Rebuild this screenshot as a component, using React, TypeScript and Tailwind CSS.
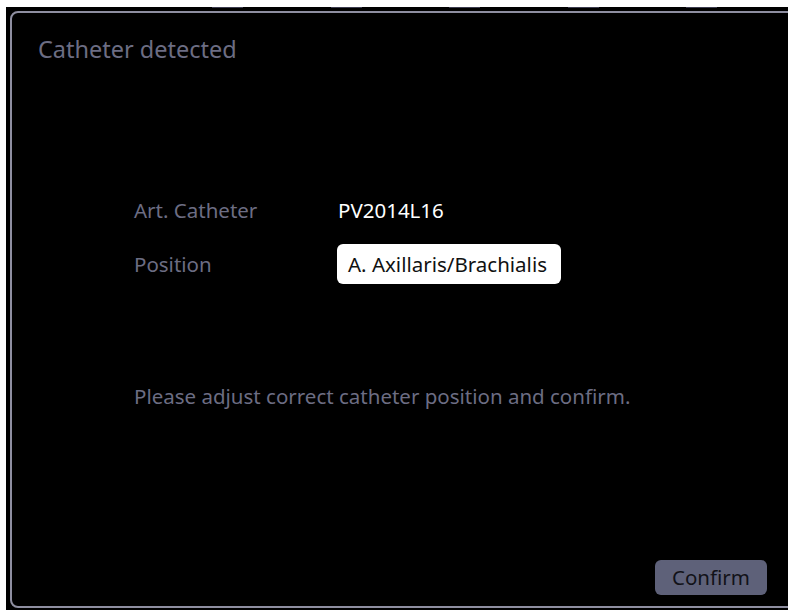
import React from 'react'

const TAB_COUNT = 5

const font = { fontFamily: '"Noto Sans", "Open Sans", sans-serif' }

function Row({ label, children }: { label: string; children: React.ReactNode }) {
  return (
    <div className="grid grid-cols-[203px_1fr] items-center h-[40px]">
      <span className="text-[#6c6d83]">{label}</span>
      <div className="flex">{children}</div>
    </div>
  )
}

export default function App() {
  return (
    <div className="w-[788px] h-[610px] bg-white overflow-hidden text-[20.5px]" style={font}>
      <div className="ml-[6px] mt-[7px] w-[782px] h-[603px] bg-black overflow-hidden flex flex-col">
        {/* tab edges peeking in from above */}
        <div className="flex h-px ml-[206px] gap-[87.5px]">
          {Array.from({ length: TAB_COUNT }).map((_, i) => (
            <div key={i} className="w-[31px] h-px bg-[#3c3c4e]" />
          ))}
        </div>

        <div className="mt-[3px] ml-[4px] w-[800px] h-[597px] shrink-0 border-2 border-[#8e8ea0] rounded-[8px]">
          <div className="w-[755px] h-full flex flex-col">
            <h1 className="ml-[26px] mt-[21px] text-[23.5px] leading-[30px] text-[#6c6d83]">Catheter detected</h1>

            <div className="ml-[122px] mt-[126px] flex flex-col gap-[14px]">
              <Row label="Art. Catheter">
                <span className="text-white ml-px">PV2014L16</span>
              </Row>
              <Row label="Position">
                <span className="bg-white text-[#111] rounded-[6px] h-[40px] w-[224px] pl-[11px] flex items-center whitespace-nowrap">
                  A. Axillaris/Brachialis
                </span>
              </Row>
            </div>

            <p className="ml-[122px] mt-[98px] leading-[28px] text-[#6c6d83]">
              Please adjust correct catheter position and confirm.
            </p>

            <div className="mt-auto mb-[11px] flex justify-end">
              <button className="w-[112px] h-[35px] pb-px rounded-[6px] bg-[#5e6179] text-[#121218] text-[20.5px] leading-none">
                Confirm
              </button>
            </div>
          </div>
        </div>
      </div>
    </div>
  )
}
